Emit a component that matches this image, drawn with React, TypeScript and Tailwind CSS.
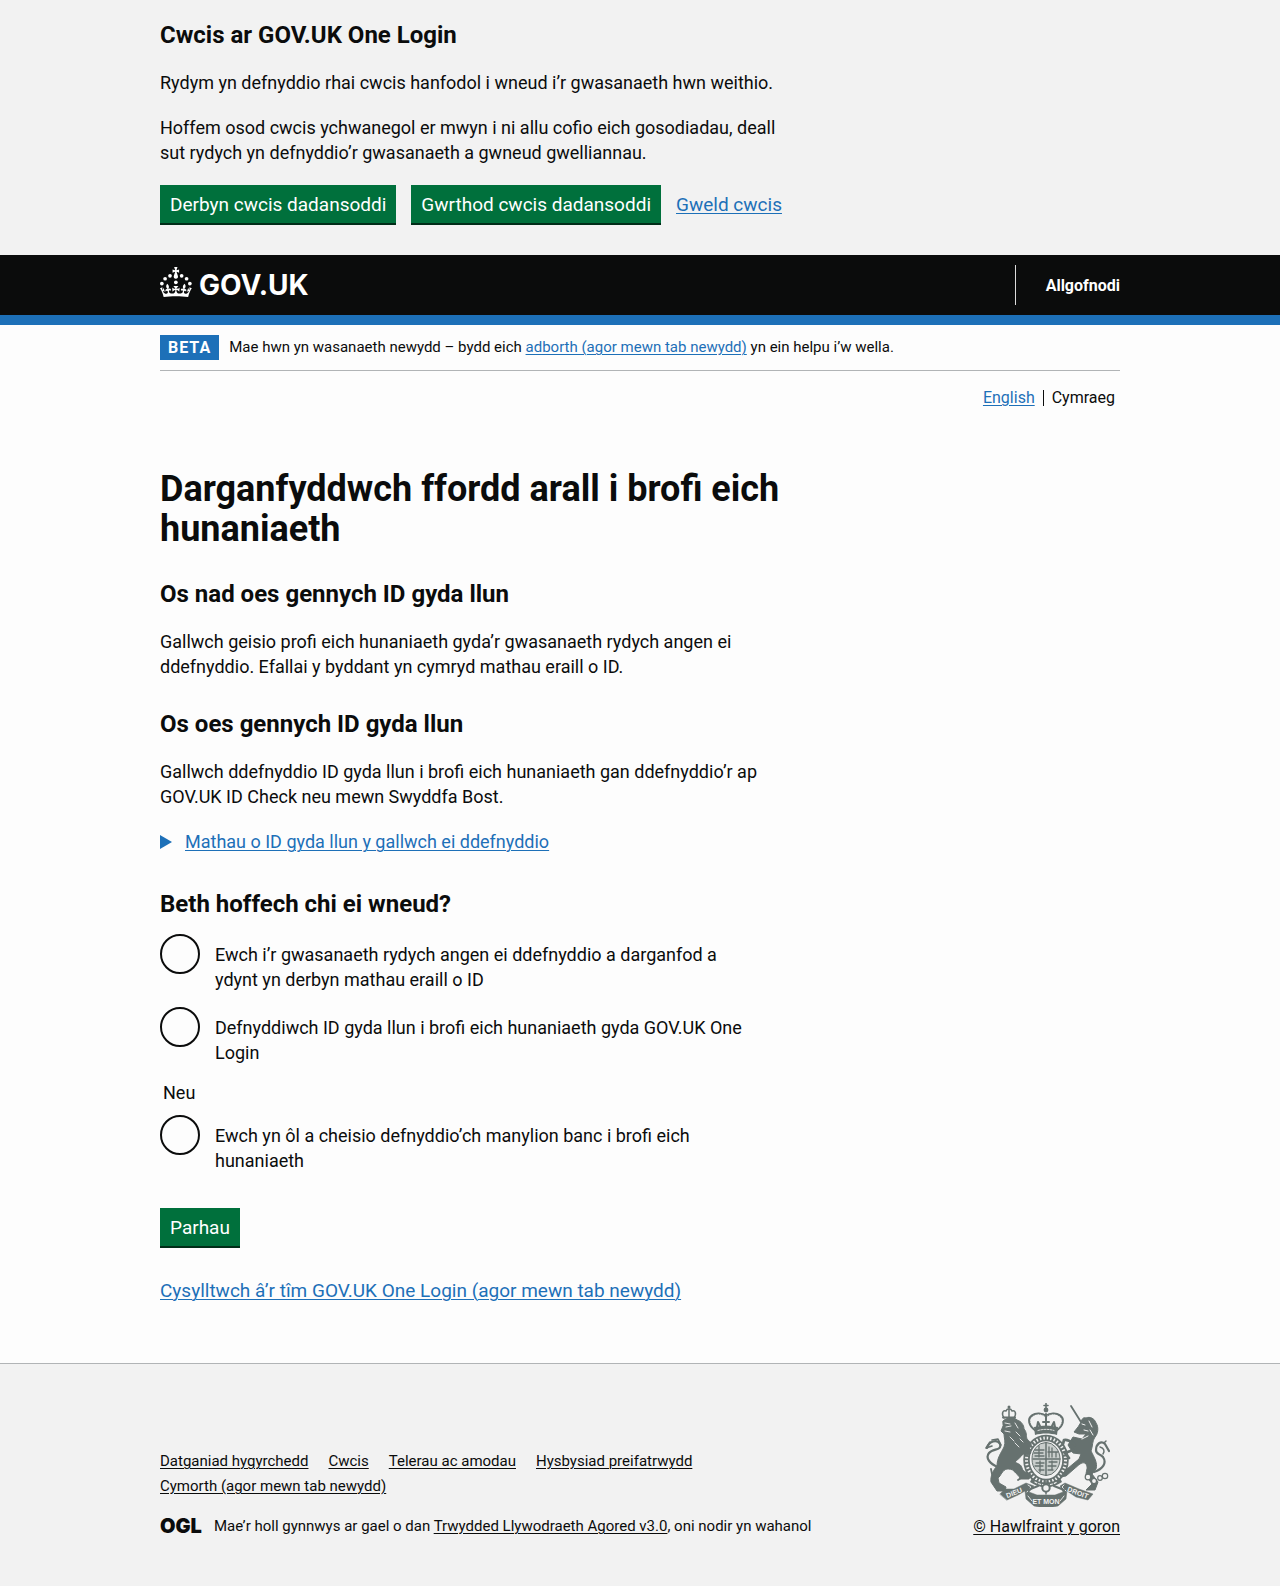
import type { ReactNode } from "react";

const linkBlue = "text-[#1d70b8] underline decoration-1 underline-offset-2";
const linkDark = "text-[#0b0c0c] underline decoration-1 underline-offset-2";
const buttonBase =
  "h-[38px] bg-[#00703c] px-[10px] text-[19px] leading-[19px] text-white shadow-[0_2px_0_#002d18]";

function Container({ children }: { children: ReactNode }) {
  return <div className="mx-auto w-full max-w-[1020px] px-[30px]">{children}</div>;
}

function Crown() {
  return (
    <svg viewBox="0 0 64 60" width="32" height="30" fill="currentColor" aria-hidden="true">
      <circle cx="20" cy="17.6" r="3.7" />
      <circle cx="10.2" cy="23.5" r="3.7" />
      <circle cx="3.7" cy="33.2" r="3.7" />
      <circle cx="31.7" cy="30.6" r="3.7" />
      <circle cx="43.3" cy="17.6" r="3.7" />
      <circle cx="53.2" cy="23.5" r="3.7" />
      <circle cx="59.7" cy="33.2" r="3.7" />
      <path d="M33.1,9.8c.2-.1.3-.3.5-.5l4.6,2.4v-6.8l-4.6,1.5c-.1-.2-.3-.3-.5-.5l1.9-5.9h-6.7l1.9,5.9c-.2.1-.3.3-.5.5l-4.6-1.5v6.8l4.6-2.4c.1.2.3.3.5.5l-2.6,8c-.9,2.8,1.2,5.7,4.1,5.7h0c3,0,5.1-2.9,4.1-5.7l-2.6-8ZM37,37.9s-3.4,3.8-4.1,6.1c2.2,0,4.2-.5,6.4-2.8l-.7,8.5c-2-2.8-4.4-4.1-5.7-3.8.1,3.1.5,6.7,5.8,7.2,3.7.3,6.7-1.5,7-3.8.4-2.6-2-4.3-3.7-1.6-1.4-4.5,2.4-6.1,4.9-3.2-1.9-4.5-1.8-7.7,2.4-10.9,3,4,2.6,7.3-1.2,11.1,2.4-1.3,6.2,0,4,4.6-1.2-2.8-3.7-2.2-4.2.2-.3,1.7.7,3.7,3,4.2,1.9.3,4.7-.9,7-5.9-1.3,0-2.4.7-3.9,1.7l2.4-8c.6,2.3,1.4,3.7,2.2,4.5.6-1.6.5-2.8,0-5.3l5,1.8c-2.6,3.6-5.2,8.7-7.3,17.5-7.4-1.1-15.7-1.7-24.5-1.7h0c-8.8,0-17.1.6-24.5,1.7-2.1-8.9-4.7-13.9-7.3-17.5l5-1.8c-.5,2.5-.6,3.7,0,5.3.8-.8,1.6-2.3,2.2-4.5l2.4,8c-1.5-1-2.6-1.7-3.9-1.7,2.3,5,5.2,6.2,7,5.9,2.3-.4,3.3-2.4,3-4.2-.5-2.4-3-3.1-4.2-.2-2.2-4.6,1.6-6,4-4.6-3.7-3.7-4.2-7.1-1.2-11.1,4.2,3.2,4.3,6.4,2.4,10.9,2.5-2.8,6.3-1.3,4.9,3.2-1.8-2.7-4.1-1-3.7,1.6.3,2.3,3.3,4.1,7,3.8,5.4-.5,5.7-4.2,5.8-7.2-1.3-.2-3.7,1-5.7,3.8l-.7-8.5c2.2,2.3,4.2,2.7,6.4,2.8-.7-2.3-4.1-6.1-4.1-6.1h10.6,0Z" />
    </svg>
  );
}

function RoyalArms() {
  return (
    <svg viewBox="0 0 125 104" width="125" height="104" aria-hidden="true" fill="#66716f" stroke="#66716f" strokeLinecap="round" strokeLinejoin="round">
      {/* central crown */}
      <g>
        <circle cx="61" cy="7" r="2.400" stroke="none" />
        <path d="M61 0.500v5M59 2.500h4" strokeWidth="1.600" fill="none" />
        <path d="M50 27C44 23 42 16 47 12.500C51 9.500 57 10 61 13C65 10 71 9.500 75 12.500C80 16 78 23 72 27" fill="none" strokeWidth="2.200" />
        <path d="M50 26C45 22 44 16 48 13.500C52 11 57 11 61 14C65 11 70 11 74 13.500C78 16 77 22 72 26" fill="none" stroke="#f2f2f2" strokeWidth="0.700" strokeDasharray="0.500 2" />
        <path d="M61 11v12M58 19h6M52 24l1-5l2 4M70 24l-1-5l-2 4" fill="none" strokeWidth="2" />
        <path d="M49 24C57 22 65 22 73 24L72 32C65 30 57 30 50 32Z" stroke="none" />
        <path d="M53 27.500C58 26 64 26 69 27.500" stroke="#f2f2f2" strokeWidth="1" strokeDasharray="1.500 1.500" fill="none" />
      </g>
      {/* garter and shield */}
      <ellipse cx="61" cy="57" rx="19.500" ry="22" fill="none" strokeWidth="6.500" />
      <ellipse cx="61" cy="57" rx="19.500" ry="22" fill="none" stroke="#f2f2f2" strokeWidth="3" strokeDasharray="1.500 2" strokeLinecap="butt" />
      <ellipse cx="61" cy="56" rx="14" ry="16.500" strokeWidth="1" fill="#c9cecc" />
      <path d="M61 40v32M48 56h26" strokeWidth="1.500" fill="none" />
      <path d="M50 47h9M49 50h9M50 53h9M64 44v10M67 45v9M71 49v5M63 49h10M51 60h8M50 63h8M54 67h5M64 59h8M63 63h8M63 67h5M54 43v11M55 58v11M67 58v9" strokeWidth="1.300" fill="none" />
      <path d="M47 75C56 81 66 81 75 75L77 79C67 86 55 86 45 79Z" stroke="none" />
      <path d="M50 79C57 83 65 83 72 79" stroke="#f2f2f2" strokeWidth="1.200" strokeDasharray="2 2" fill="none" />
      {/* lion */}
      <g>
        <path d="M19 15C16 10 18 7 21 8C22 5 26 5 27 8C30 7 32 10 29 15M24 7v7" fill="none" strokeWidth="1.500" />
        <path d="M18 14.500h12" strokeWidth="2" />
        <circle cx="24" cy="4" r="1.500" stroke="none" />
        <path d="M18 18C22 14 29 14 32 17C36 18 39 22 39 26C42 29 41 33 42 36C44 38 47 40 46 43L44 46L46 50L43 52L38 51C36 54 32 57 30 59C33 61 36 61 37 65C38 69 42 69 46 72L44 76L35 76C35 73 31 71 29 68C27 66 24 66 22 66C17 67 16 73 13 75L14 80L21 84L20 88H12L6 79C5 73 9 66 12 63C12 55 16 50 19 44C21 39 19 35 19 31L16 28L18 23Z" strokeWidth="1" />
        <path d="M20 20l5 1M21 24l5-1M20 28l5 1M30 20l3 5M31 29l4 4M25 34l4 4M30 40l4 4M35 36l3 3" stroke="#f2f2f2" strokeWidth="0.900" fill="none" />
        <path d="M13 64C5 61 0 55 4 50C8 45 17 48 15 41C12 36 4 38 2 45" fill="none" strokeWidth="2.200" />
        <path d="M5 39l-4 6l6-2M7 37l6-1l3 6" fill="none" strokeWidth="1.600" />
        <path d="M6 66l1 5M8 80l5 6M36 75l-3 2" fill="none" strokeWidth="1.800" />
      </g>
      {/* unicorn */}
      <g>
        <path d="M86 3L96 19" fill="none" strokeWidth="1.800" />
        <path d="M96 19C97 15 99 14 101 15C105 13 110 16 111 20C114 24 113 31 110 34C107 38 108 43 106 48C109 54 113 60 111 66L107 71L113 79L110 87L101 87L107 81L101 72C101 67 104 64 100 60C96 59 94 62 89 66L81 73L75 74L82 66L94 56L96 51L88 50L83 42L88 34L97 36L101 31L94 31L89 29L93 24Z" strokeWidth="1" />
        <path d="M97 21l3 1M104 18l3 6M105 27l3 5M99 27l4 1M97 36l6-3" stroke="#f2f2f2" strokeWidth="1" fill="none" />
        <path d="M90 42C86 39 84 36 79 37L78 41M88 47L80 50L84 55" fill="none" strokeWidth="2.800" />
        <path d="M109 69C118 66 122 60 118 54C115 50 111 52 111 47C111 41 116 37 120 41L124 48" fill="none" strokeWidth="2.200" />
        <path d="M115 44C119 45 120 48 118 51M119 40l2-2" fill="none" strokeWidth="1.500" />
        <g fill="#f2f2f2" strokeWidth="1.200">
          <circle cx="103" cy="74" r="2.800" />
          <circle cx="109" cy="78" r="2.500" />
          <circle cx="115" cy="75" r="2.300" />
          <circle cx="120" cy="73" r="2.700" />
        </g>
      </g>
      {/* motto ribbon */}
      <path d="M15 91L20 86L29 86L41 80L49 83L44 89L52 92H70L78 89L75 83L80 80L94 86L108 91L103 97L91 94L82 88L81 96L73 103C65 105 57 105 49 103L41 96L40 88L33 92L22 97Z" strokeWidth="0.500" />
      <path d="M43 82L46 84L42 89M79 82L77 84L81 88M43 93L47 98M79 93L75 98" fill="none" stroke="#f2f2f2" strokeWidth="0.900" />
      <path d="M43 87L53 83M79 87L69 83" fill="none" strokeWidth="2" />
      <path d="M61 78v13" fill="none" strokeWidth="1.500" />
      <circle cx="61" cy="85" r="3.700" fill="#f2f2f2" strokeWidth="2" />
      <g fill="#f2f2f2" stroke="none" fontFamily="Liberation Sans" fontWeight="700" fontSize="7" textAnchor="middle">
        <text x="30" y="92" transform="rotate(-22 30 92)">DIEU</text>
        <text x="61" y="101">ET MON</text>
        <text x="92" y="92" transform="rotate(21 92 92)">DROIT</text>
      </g>
    </svg>
  );
}

function Radio({ id, children }: { id: string; children: ReactNode }) {
  return (
    <div className="flex items-start">
      <input
        type="radio"
        id={id}
        name="choice"
        className="size-10 shrink-0 appearance-none rounded-full border-2 border-[#0b0c0c] bg-transparent checked:bg-[radial-gradient(#0b0c0c_50%,transparent_52%)]"
      />
      <label htmlFor={id} className="pt-2 pr-8 pl-[15px]">
        {children}
      </label>
    </div>
  );
}

function H2({ children }: { children: ReactNode }) {
  return <h2 className="text-[24px] leading-[30px] font-bold">{children}</h2>;
}

export default function App() {
  return (
    <div className="bg-[#fdfdfd] font-['Roboto',sans-serif] text-[18px] leading-[25px] text-[#0b0c0c]">
      <section aria-label="Cwcis ar GOV.UK One Login" className="bg-[#f2f2f2] pt-5 pb-[30px]">
        <Container>
          <div className="max-w-[630px]">
            <H2>Cwcis ar GOV.UK One Login</H2>
            <p className="mt-5">Rydym yn defnyddio rhai cwcis hanfodol i wneud i’r gwasanaeth hwn weithio.</p>
            <p className="mt-5">
              Hoffem osod cwcis ychwanegol er mwyn i ni allu cofio eich gosodiadau, deall sut rydych yn defnyddio’r
              gwasanaeth a gwneud gwelliannau.
            </p>
            <div className="mt-5 flex flex-wrap items-center gap-[15px] pb-0.5">
              <button type="button" className={buttonBase}>Derbyn cwcis dadansoddi</button>
              <button type="button" className={buttonBase}>Gwrthod cwcis dadansoddi</button>
              <a href="#cwcis" className={`text-[19px] ${linkBlue}`}>Gweld cwcis</a>
            </div>
          </div>
        </Container>
      </section>

      <header className="border-b-10 border-[#1d70b8] bg-[#0b0c0c] text-white">
        <Container>
          <div className="flex h-[60px] items-center justify-between">
            <a href="#govuk" aria-label="GOV.UK" className="flex h-9 items-start gap-[7px]">
              <Crown />
              <span className="font-['Inter',sans-serif] text-[28px] leading-9 font-bold">GOV.UK</span>
            </a>
            <nav aria-label="Cyfrif" className="flex h-10 items-center border-l border-[#dcdcdc] pl-[30px]">
              <a href="#allgofnodi" className="text-[16px] font-bold">Allgofnodi</a>
            </nav>
          </div>
        </Container>
      </header>

      <Container>
        <div className="flex items-center gap-[10px] border-b border-[#b1b4b6] py-[10px] text-[15px]">
          <strong className="bg-[#1d70b8] px-2 text-[16px] tracking-[1px] text-white">BETA</strong>
          <span>
            Mae hwn yn wasanaeth newydd – bydd eich{" "}
            <a href="#adborth" className={linkBlue}>adborth (agor mewn tab newydd)</a> yn ein helpu i’w wella.
          </span>
        </div>
        <nav aria-label="Iaith" className="mt-[14px] flex items-center justify-end pr-[5px] text-[16px]">
          <a href="#en" lang="en" className={linkBlue}>English</a>
          <span className="mr-2 ml-2 h-4 w-px bg-[#0b0c0c]" />
          <span>Cymraeg</span>
        </nav>

        <main className="pt-[59px] pb-[60px]">
          <div className="max-w-[630px]">
            <h1 className="text-[36px] leading-10 font-bold">Darganfyddwch ffordd arall i brofi eich hunaniaeth</h1>
            <div className="mt-[30px]">
              <H2>Os nad oes gennych ID gyda llun</H2>
            </div>
            <p className="mt-5">
              Gallwch geisio profi eich hunaniaeth gyda’r gwasanaeth rydych angen ei ddefnyddio. Efallai y byddant yn
              cymryd mathau eraill o ID.
            </p>
            <div className="mt-[30px]">
              <H2>Os oes gennych ID gyda llun</H2>
            </div>
            <p className="mt-5">
              Gallwch ddefnyddio ID gyda llun i brofi eich hunaniaeth gan ddefnyddio’r ap GOV.UK ID Check neu mewn
              Swyddfa Bost.
            </p>
            <details className="mt-5">
              <summary className="flex w-fit cursor-pointer list-none items-center">
                <svg viewBox="0 0 12 14" width="12" height="14" fill="#1d70b8" aria-hidden="true">
                  <path d="M0 0l12 7l-12 7z" />
                </svg>
                <span className={`ml-[13px] ${linkBlue}`}>Mathau o ID gyda llun y gallwch ei ddefnyddio</span>
              </summary>
            </details>
            <form onSubmit={(e) => e.preventDefault()}>
              <fieldset className="mt-[35px]">
                <legend className="mb-[15px] text-[24px] leading-[30px] font-bold">Beth hoffech chi ei wneud?</legend>
                <Radio id="service">
                  Ewch i’r gwasanaeth rydych angen ei ddefnyddio a darganfod a ydynt yn derbyn mathau eraill o ID
                </Radio>
                <div className="mt-[15px]">
                  <Radio id="photo-id">
                    Defnyddiwch ID gyda llun i brofi eich hunaniaeth gyda GOV.UK One Login
                  </Radio>
                </div>
                <p className="mt-[15px] mb-[10px] pl-[3px]">Neu</p>
                <Radio id="bank">Ewch yn ôl a cheisio defnyddio’ch manylion banc i brofi eich hunaniaeth</Radio>
              </fieldset>
              <button type="submit" className={`mt-[35px] ${buttonBase}`}>Parhau</button>
            </form>
            <p className="mt-8 text-[19px]">
              <a href="#cysylltu" className={linkBlue}>Cysylltwch â’r tîm GOV.UK One Login (agor mewn tab newydd)</a>
            </p>
          </div>
        </main>
      </Container>

      <footer className="border-t border-[#b1b4b6] bg-[#f2f2f2] pt-[39px] pb-[47px]">
        <Container>
          <div className="flex flex-wrap items-end justify-between text-[15px]">
            <div className="max-w-[700px]">
              <ul className="flex max-w-[600px] flex-wrap gap-x-5">
                <li><a href="#hygyrchedd" className={linkDark}>Datganiad hygyrchedd</a></li>
                <li><a href="#cwcis" className={linkDark}>Cwcis</a></li>
                <li><a href="#telerau" className={linkDark}>Telerau ac amodau</a></li>
                <li><a href="#preifatrwydd" className={linkDark}>Hysbysiad preifatrwydd</a></li>
                <li><a href="#cymorth" className={linkDark}>Cymorth (agor mewn tab newydd)</a></li>
              </ul>
              <div className="mt-[15px] flex items-center">
                <span className="w-[54px] font-['Inter',sans-serif] text-[20px] font-black">OGL</span>
                <p>
                  Mae’r holl gynnwys ar gael o dan{" "}
                  <a href="#ogl" className={linkDark}>Trwydded Llywodraeth Agored v3.0</a>, oni nodir yn wahanol
                </p>
              </div>
            </div>
            <a href="#hawlfraint" className="flex flex-col items-end gap-[7px] text-[16px]">
              <span className="mr-[10px]"><RoyalArms /></span>
              <span className={linkDark}>© Hawlfraint y goron</span>
            </a>
          </div>
        </Container>
      </footer>
    </div>
  );
}
